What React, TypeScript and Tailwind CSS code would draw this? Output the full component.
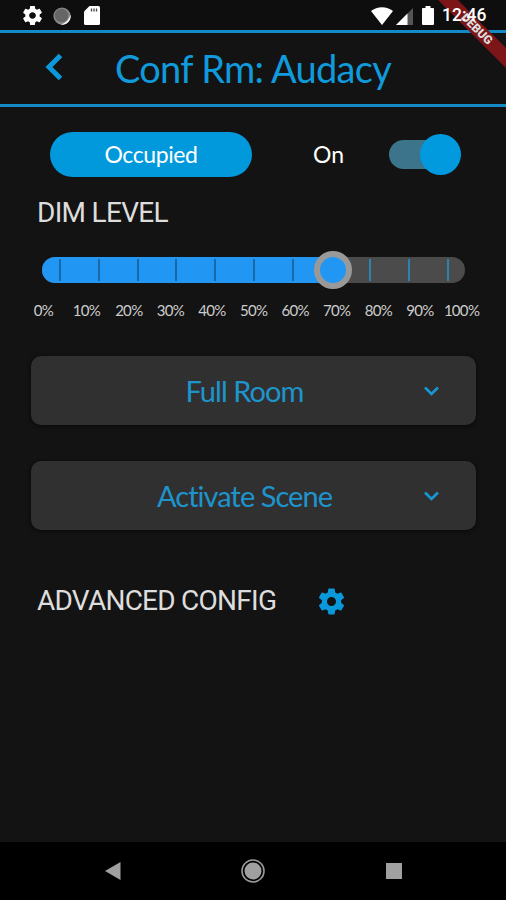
const levels = [0, 10, 20, 30, 40, 50, 60, 70, 80, 90, 100];

function Gear({ className }: { className: string }) {
  return (
    <svg className={className} viewBox="0 0 24 24" fill="currentColor">
      <path d="M19.430 12.980c.04-.32.07-.64.07-.98s-.03-.66-.07-.98l2.110-1.650c.19-.15.24-.42.12-.64l-2-3.460c-.12-.22-.39-.3-.61-.22l-2.490 1c-.52-.4-1.080-.73-1.690-.98l-.38-2.650C14.460 2.180 14.250 2 14 2h-4c-.25 0-.46.18-.49.42l-.38 2.650c-.61.25-1.170.59-1.690.98l-2.490-1c-.23-.09-.49 0-.61.22l-2 3.460c-.13.22-.07.49.12.64l2.110 1.650c-.04.32-.07.65-.07.98s.03.66.07.98l-2.110 1.650c-.19.15-.24.42-.12.64l2 3.460c.12.22.39.3.61.22l2.490-1c.52.4 1.080.73 1.690.98l.38 2.650c.03.24.24.42.49.42h4c.25 0 .46-.18.49-.42l.38-2.650c.61-.25 1.170-.59 1.690-.98l2.490 1c.23.09.49 0 .61-.22l2-3.460c.12-.22.07-.49-.12-.64l-2.110-1.650zM12 15.500c-1.930 0-3.500-1.570-3.500-3.500s1.570-3.500 3.500-3.500 3.500 1.570 3.500 3.500-1.570 3.500-3.500 3.500z" />
    </svg>
  );
}

function StatusBar() {
  return (
    <div className="relative flex h-[30px] items-center bg-[#0e0e0e] pt-[1px] text-white">
      <Gear className="ml-[21px] h-[23px] w-[23px]" />
      <svg className="ml-[9px] h-[18px] w-[18px]" viewBox="0 0 18 18">
        <circle cx="9" cy="9" r="8.6" fill="#8a8a8a" />
        <path d="M17.600 7.500A8.800 8.800 0 0 1 7 17.600C12 17 16 13 17.600 7.500Z" fill="#fff" />
        <circle cx="8.500" cy="8.500" r="6.800" fill="#666" />
      </svg>
      <svg className="ml-[13px] h-[19px] w-[16px]" viewBox="0 0 16 19">
        <path d="M5.500 0H14.500Q16 0 16 1.500V17.500Q16 19 14.500 19H1.500Q0 19 0 17.500V5.500Z" fill="#fff" />
        <path d="M7.500 2.500V5.500M10 2.500V5.500M12.500 2.500V5.500" stroke="#444" strokeWidth="1.300" />
      </svg>
      <svg className="ml-[271px] h-[18px] w-[22px]" viewBox="0 0 22 18">
        <path d="M0 4C6-1.100 16-1.100 22 4L11 18Z" fill="#fff" />
      </svg>
      <svg className="ml-[3px] h-[17px] w-[17px] translate-y-[1px]" viewBox="0 0 17 17">
        <path d="M17 0V17H0Z" fill="#555" />
        <path d="M11.500 5.500V17H0Z" fill="#fff" />
      </svg>
      <svg className="ml-[9px] h-[19px] w-[12px]" viewBox="0 0 12 20" preserveAspectRatio="none">
        <path d="M3.500 0H8.500V2H11Q12 2 12 3V19Q12 20 11 20H1Q0 20 0 19V3Q0 2 1 2H3.500Z" fill="#fff" />
      </svg>
      <span className="relative z-20 ml-[8px] font-[Roboto] text-[17.500px] font-medium leading-none">12:46</span>
    </div>
  );
}

function DebugBanner() {
  return (
    <div className="pointer-events-none absolute right-0 top-0 z-10 h-[90px] w-[90px] overflow-hidden">
      <div className="absolute left-[1px] top-[22px] flex h-[14px] w-[120px] rotate-45 items-center justify-center bg-[#7c1518] font-[Roboto] text-[12px] font-black leading-none text-[#ddd]">
        DEBUG
      </div>
    </div>
  );
}

function DimSlider() {
  return (
    <div className="relative ml-[42px] mt-[28px] h-[26px] w-[423px] rounded-full bg-[#4b4b4b]">
      <div className="h-full w-[291px] rounded-l-full bg-[#2196f3]" />
      <div className="absolute inset-y-[2px] left-[17px] flex w-[390px] justify-between">
        {levels.map((level) => (
          <span key={level} className={level < 70 ? "w-[2px] bg-[#1769aa]" : "w-[2px] bg-[#2a83b0]"} />
        ))}
      </div>
      <div className="absolute left-[272px] top-[-6px] h-[38px] w-[38px] rounded-full border-[6.500px] border-[#999] bg-[#2196f3]" />
    </div>
  );
}

function Dropdown({ label }: { label: string }) {
  return (
    <button className="relative ml-[31px] flex h-[69px] w-[445px] items-center justify-center rounded-[10px] bg-[#303030] pr-[18px] text-[29px] leading-none tracking-[-0.950px] text-[#1e94cd] shadow-[0_1px_4px_#080808] [font-variant-ligatures:none]">
      {label}
      <svg className="absolute right-[37px] top-[30px] h-[10px] w-[15px]" viewBox="0 0 15 10" fill="none">
        <path d="M1 1.500L7.500 8L14 1.500" stroke="#1698d5" strokeWidth="2.600" />
      </svg>
    </button>
  );
}

export default function App() {
  return (
    <div className="relative flex h-[900px] w-[506px] flex-col overflow-hidden bg-[#131313] font-[Lato,sans-serif]">
      <StatusBar />
      <DebugBanner />
      <header className="relative flex h-[77px] items-center border-y-[3px] border-[#128bc7]">
        <svg className="ml-[45px] h-[28px] w-[18px] -translate-y-[2px]" viewBox="0 0 18 28" fill="none">
          <path d="M15.500 2.500L4 14L15.500 25.500" stroke="#0d98dc" strokeWidth="5" />
        </svg>
        <h1 className="ml-[52px] -translate-y-[1px] whitespace-nowrap text-[38px] leading-none tracking-[-0.720px] text-[#109adb]">Conf Rm: Audacy</h1>
      </header>

      <div className="mt-[25px] flex h-[45px] items-center">
        <button className="ml-[50px] h-[45px] w-[202px] rounded-full bg-[#0199dc] text-[23px] tracking-[-0.400px] text-white">
          Occupied
        </button>
        <span className="ml-[61px] w-[32px] text-[23px] text-white">On</span>
        <div className="relative ml-[44px] h-[29px] w-[68px] rounded-full bg-[#3b748b]">
          <div className="absolute -top-[6px] left-[31px] h-[41px] w-[41px] rounded-full bg-[#019adf]" />
        </div>
      </div>

      <h2 className="ml-[37px] mt-[20px] font-[Roboto] text-[28px] leading-[32px] tracking-[-0.700px] text-[#ddd]">DIM LEVEL</h2>
      <DimSlider />
      <div className="ml-[22px] mt-[17px] flex h-[20px] items-center text-center text-[15px] tracking-[-0.700px] text-[#ccc]">
        {levels.map((level) => (
          <span key={level} className={level < 20 ? "w-[43px]" : "w-[41.600px]"}>
            {level}%
          </span>
        ))}
      </div>

      <div className="mt-[36px] flex flex-col gap-[36px]">
        <Dropdown label="Full Room" />
        <Dropdown label="Activate Scene" />
      </div>

      <div className="mt-[55px] flex h-[32px] items-center">
        <h2 className="ml-[37px] w-[240px] whitespace-nowrap font-[Roboto] text-[28px] leading-[32px] tracking-[-0.750px] text-[#ddd]">
          ADVANCED CONFIG
        </h2>
        <Gear className="ml-[39px] h-[31px] w-[31px] text-[#0a98dc]" />
      </div>

      <nav className="relative mt-auto flex h-[58px] items-center bg-black">
        <svg className="ml-[105px] h-[18px] w-[16px]" viewBox="0 0 16 18">
          <path d="M0 9L15.500 0V18Z" fill="#a0a0a0" />
        </svg>
        <svg className="ml-[120px] h-[24px] w-[24px]" viewBox="0 0 24 24">
          <circle cx="12" cy="12" r="11" fill="none" stroke="#999" strokeWidth="1.600" />
          <circle cx="12" cy="12" r="8.500" fill="#a0a0a0" />
        </svg>
        <div className="ml-[121px] h-[16px] w-[16px] bg-[#a0a0a0]" />
      </nav>
    </div>
  );
}
